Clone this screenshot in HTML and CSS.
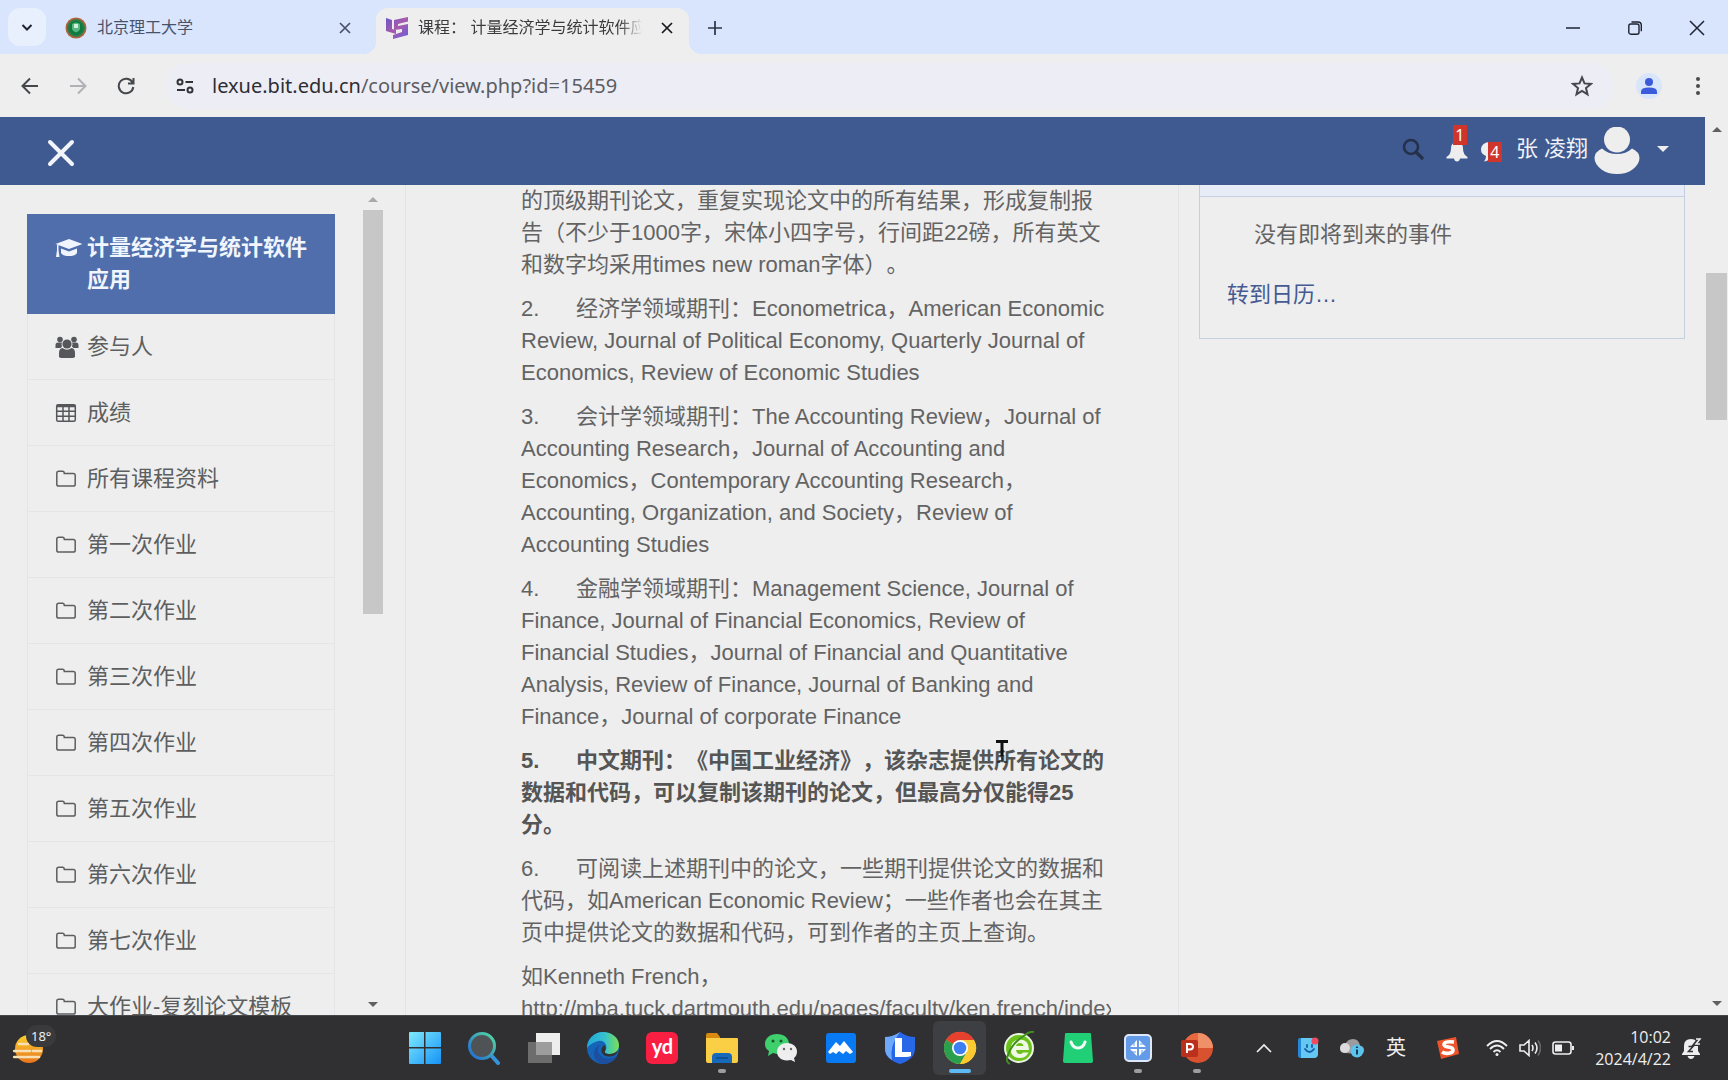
FILE: index.html
```html
<!DOCTYPE html>
<html lang="zh-CN">
<head>
<meta charset="utf-8">
<title>课程： 计量经济学与统计软件应用</title>
<link rel="stylesheet" href="styles.css">
</head>
<body>
<svg class="defs" aria-hidden="true">
  <symbol id="folder" viewBox="0 0 22 22"><path d="M1.800 5.200q0-1.900 1.900-1.900h3.800q1.700 0 1.800 2.100h9q1.900 0 1.900 1.900v8.900q0 1.900-1.900 1.900H3.700q-1.900 0-1.900-1.900z" fill="none" stroke="currentColor" stroke-width="1.500"/></symbol>
  <symbol id="x" viewBox="0 0 14 14"><path d="M2 2l10 10M12 2L2 12" fill="none" stroke="currentColor" stroke-width="1.700"/></symbol>
</svg>

<header class="tabs">
  <button class="tab-search" aria-label="搜索标签页"><svg width="12" height="12" viewBox="0 0 12 12"><path d="M1.500 4L6 8.500 10.500 4" fill="none" stroke="#1f2430" stroke-width="2"/></svg></button>
  <div class="tab">
    <svg width="22" height="22" viewBox="0 0 22 22"><circle cx="11" cy="11" r="10.500" fill="#b5623c"/><circle cx="11" cy="11" r="9" fill="#2f7d46"/><circle cx="11" cy="11" r="7" fill="#0d7a3f"/><path d="M7 7q4-3 8 0v5q-1 3-4 3.500-3-.5-4-3.500z" fill="#58b781"/><path d="M9 7h4v4H9z" fill="#d3efdc"/></svg>
    <span class="tab-title">北京理工大学</span>
    <button class="plain" aria-label="关闭"><svg width="14" height="14"><use href="#x"/></svg></button>
  </div>
  <div class="tab active">
    <svg width="22" height="22" viewBox="0 0 22 22"><defs><linearGradient id="lg" x1="0" y1="0" x2="1" y2="1"><stop offset="0" stop-color="#6a55c8"/><stop offset=".5" stop-color="#a85bab"/><stop offset="1" stop-color="#665de0"/></linearGradient></defs><path d="M0 1l6 2v9l4 1v4L0 14zM8 3l14-3v4.500L12 7v2l10-2v11L7 22v-4l9-3v-3l-8 1z" fill="url(#lg)"/></svg>
    <span class="tab-title">课程： 计量经济学与统计软件应用</span>
    <button class="plain" aria-label="关闭"><svg width="14" height="14"><use href="#x"/></svg></button>
  </div>
  <button class="plain new-tab" aria-label="新标签页"><svg width="16" height="16" viewBox="0 0 16 16"><path d="M8 1v14M1 8h14" stroke="#2b3446" stroke-width="1.700"/></svg></button>
  <div class="win">
    <button class="plain" aria-label="最小化"><svg width="14" height="14" viewBox="0 0 14 14"><path d="M0 7h14" stroke="#1d2330" stroke-width="1.500"/></svg></button>
    <button class="plain" aria-label="还原"><svg width="14" height="14" viewBox="0 0 14 14"><rect x=".8" y="3" width="10.200" height="10.200" rx="2" fill="none" stroke="#1d2330" stroke-width="1.400"/><path d="M3.500 1h6.500q3.300 0 3.300 3.300v6" fill="none" stroke="#1d2330" stroke-width="1.400"/></svg></button>
    <button class="plain" aria-label="关闭窗口"><svg width="16" height="16" viewBox="0 0 16 16"><path d="M1 1l14 14M15 1L1 15" stroke="#1d2330" stroke-width="1.500"/></svg></button>
  </div>
</header>

<div class="toolbar">
  <nav class="navs">
    <button class="plain" aria-label="后退"><svg width="18" height="18" viewBox="0 0 18 18"><path d="M17 9H2M9 1.500L1.500 9 9 16.500" fill="none" stroke="#44474b" stroke-width="2"/></svg></button>
    <button class="plain" aria-label="前进"><svg width="18" height="18" viewBox="0 0 18 18"><path d="M1 9h15M9 1.500L16.500 9 9 16.500" fill="none" stroke="#b0b1b4" stroke-width="2"/></svg></button>
    <button class="plain" aria-label="刷新"><svg width="18" height="18" viewBox="0 0 18 18"><path d="M15.500 5.500A7.300 7.300 0 1 0 16.300 10M16.500 1v5.500H11" fill="none" stroke="#44474b" stroke-width="2"/></svg></button>
  </nav>
  <div class="omnibox">
    <svg width="18" height="16" viewBox="0 0 18 16" fill="none" stroke="#303236" stroke-width="2"><circle cx="4" cy="4" r="2.500"/><path d="M9.500 4H17M1 12h8"/><circle cx="14" cy="12" r="2.500"/></svg>
    <div class="url" role="textbox" aria-label="地址栏">lexue.bit.edu.cn<span>/course/view.php?id=15459</span></div>
    <button class="plain" aria-label="收藏"><svg width="22" height="22" viewBox="0 0 22 22"><path d="M11 2.500l2.500 5.900 6.400.5-4.900 4.200 1.500 6.300L11 16l-5.500 3.400L7 13.100 2.100 8.900l6.400-.5z" fill="none" stroke="#46484d" stroke-width="2"/></svg></button>
  </div>
  <button class="plain profile" aria-label="个人资料"><svg width="26" height="26" viewBox="0 0 26 26"><circle cx="13" cy="13" r="13" fill="#d9e5fb"/><circle cx="13" cy="9" r="4" fill="#3b5bdb"/><path d="M5 21v-2.500q0-4 8-4t8 4V21z" fill="#3b5bdb"/></svg></button>
  <button class="plain more" aria-label="更多"><svg width="6" height="20" viewBox="0 0 6 20" fill="#4a4a4d"><circle cx="3" cy="3" r="2"/><circle cx="3" cy="10" r="2"/><circle cx="3" cy="17" r="2"/></svg></button>
</div>

<div class="viewport">
  <div class="page">
    <header class="site-bar">
      <button class="plain" aria-label="关闭菜单"><svg width="28" height="28" viewBox="0 0 28 28"><path d="M3 3l22 22M25 3L3 25" stroke="#f1f4fb" stroke-width="4" stroke-linecap="round"/></svg></button>
      <div class="site-tools">
        <button class="plain raised" aria-label="搜索"><svg width="22" height="22" viewBox="0 0 22 22"><circle cx="9" cy="9" r="7" fill="none" stroke="#25304a" stroke-width="2.600"/><path d="M14 14l6 6" stroke="#25304a" stroke-width="3.200" stroke-linecap="round"/></svg></button>
        <button class="plain notice bell" aria-label="通知"><svg width="22" height="22" viewBox="0 0 22 22"><path d="M11 0q1.500 0 1.500 2Q17 3 17 8.500q0 6 4.500 8.500v1.500h-7.500q-.5 3-3 3t-3-3H.5V17Q5 14.500 5 8.500 5 3 9.500 2 9.500 0 11 0z" fill="#eeeeee"/></svg><span class="badge">1</span></button>
        <button class="plain notice chat" aria-label="消息"><svg width="22" height="22" viewBox="0 0 22 22"><path d="M10 1c6 0 10 3 10 7.500S16 16 10 16q-1 4-6 4.500 2-2 2-5.500-5-2-5-6.500C1 4 5 1 10 1z" fill="#eeeeee"/></svg><span class="badge">4</span></button>
        <span class="user raised">张 凌翔</span>
        <svg width="46" height="48" viewBox="0 0 46 48" fill="#eeeeee"><circle cx="23" cy="12.500" r="13"/><path d="M.5 31q0-6 7.500-9.500Q14 27 23 27t15-5.500q7.500 3.500 7.500 9.500 0 6-7 11.500-6 4.500-15.500 4.500T7.500 42.500Q.5 37 .5 31z"/></svg>
        <button class="plain raised" aria-label="用户菜单"><svg width="12" height="6" viewBox="0 0 12 6"><path d="M0 0h12L6 6z" fill="#eeeeee"/></svg></button>
      </div>
    </header>
    <div class="columns">
      <aside class="sidebar">
        <nav class="menu">
          <a class="current" href="#"><svg width="28" height="22" viewBox="0 0 28 22" fill="#f0f4fc"><path d="M14 1l13.500 5L14 11 .5 6z"/><path d="M6 10.500l8 3 8-3V15q-1.500 3-8 3t-8-3zM2 7h1.500v5l1 7H1l1-7z"/></svg><span>计量经济学与统计软件应用</span></a>
          <a href="#"><svg width="24" height="22" viewBox="0 0 24 22" fill="#55575a"><circle cx="5" cy="3.500" r="2.800"/><circle cx="19" cy="3.500" r="2.800"/><path d="M.5 12V9q0-2.500 2.500-2.500h4Q6 8 7 10.500L5.500 12zM23.500 12V9q0-2.500-2.500-2.500h-4q1 1.500 0 4l1.500 1.500z"/><circle cx="12" cy="8" r="4.600"/><path d="M4 21v-4q0-4.500 3.500-5 4.500 3.500 9 0 3.500.5 3.500 5v4q-1 1-2.500 1h-11Q5 22 4 21z"/></svg><span>参与人</span></a>
          <a href="#"><svg width="22" height="22" viewBox="0 0 22 22" fill="none" stroke="#55575a" stroke-width="1.500"><rect x="1.700" y="2.700" width="18.600" height="16.600" rx="1.500"/><path d="M1.700 4h18.600" stroke-width="2.500"/><path d="M1.700 9.300h18.600M1.700 14.300h18.600M8 4v15M14 4v15"/></svg><span>成绩</span></a>
          <a href="#"><svg width="22" height="22"><use href="#folder"/></svg><span>所有课程资料</span></a>
          <a href="#"><svg width="22" height="22"><use href="#folder"/></svg><span>第一次作业</span></a>
          <a href="#"><svg width="22" height="22"><use href="#folder"/></svg><span>第二次作业</span></a>
          <a href="#"><svg width="22" height="22"><use href="#folder"/></svg><span>第三次作业</span></a>
          <a href="#"><svg width="22" height="22"><use href="#folder"/></svg><span>第四次作业</span></a>
          <a href="#"><svg width="22" height="22"><use href="#folder"/></svg><span>第五次作业</span></a>
          <a href="#"><svg width="22" height="22"><use href="#folder"/></svg><span>第六次作业</span></a>
          <a href="#"><svg width="22" height="22"><use href="#folder"/></svg><span>第七次作业</span></a>
          <a href="#"><svg width="22" height="22"><use href="#folder"/></svg><span>大作业-复刻论文模板</span></a>
        </nav>
        <div class="scroll side-scroll"><i class="up"></i><i class="thumb"></i><i class="down"></i></div>
      </aside>
      <main class="content">
        <article>
          <p>的顶级期刊论文，重复实现论文中的所有结果，形成复制报<br>告（不少于1000字，宋体小四字号，行间距22磅，所有英文<br>和数字均采用times new roman字体）。</p>
          <p>2.&nbsp;&nbsp;&nbsp;&nbsp;&nbsp;&nbsp;经济学领域期刊：Econometrica，American Economic<br>Review, Journal of Political Economy, Quarterly Journal of<br>Economics, Review of Economic Studies</p>
          <p>3.&nbsp;&nbsp;&nbsp;&nbsp;&nbsp;&nbsp;会计学领域期刊：The Accounting Review，Journal of<br>Accounting Research，Journal of Accounting and<br>Economics，Contemporary Accounting Research，<br>Accounting, Organization, and Society，Review of<br>Accounting Studies</p>
          <p>4.&nbsp;&nbsp;&nbsp;&nbsp;&nbsp;&nbsp;金融学领域期刊：Management Science, Journal of<br>Finance, Journal of Financial Economics, Review of<br>Financial Studies，Journal of Financial and Quantitative<br>Analysis, Review of Finance, Journal of Banking and<br>Finance，Journal of corporate Finance</p>
          <p><b>5.&nbsp;&nbsp;&nbsp;&nbsp;&nbsp;&nbsp;中文期刊：《中国工业经济》，该杂志提供所有论文的<br>数据和代码，可以复制该期刊的论文，但最高分仅能得25<br>分。</b></p>
          <p>6.&nbsp;&nbsp;&nbsp;&nbsp;&nbsp;&nbsp;可阅读上述期刊中的论文，一些期刊提供论文的数据和<br>代码，如American Economic Review；一些作者也会在其主<br>页中提供论文的数据和代码，可到作者的主页上查询。</p>
          <p>如Kenneth French，<br>http://mba.tuck.dartmouth.edu/pages/faculty/ken.french/index</p>
        </article>
      </main>
      <aside class="events">
        <section class="card">
          <div class="card-head"></div>
          <p>没有即将到来的事件</p>
          <a href="#">转到日历…</a>
        </section>
      </aside>
    </div>
  </div>
  <div class="scroll page-scroll"><i class="up"></i><i class="thumb"></i><i class="down"></i></div>
</div>

<svg class="cursor" width="12" height="24" viewBox="0 0 12 24" aria-hidden="true"><path d="M0 1.500h12M6 1.500v15" stroke="#111" stroke-width="3"/><path d="M6 17v4M1 22h3M8 22h3" stroke="#222" stroke-width="1.500"/></svg>

<footer class="taskbar">
  <div class="weather">
    <svg width="32" height="32" viewBox="0 0 32 32"><defs><linearGradient id="sun" x1="0" y1="0" x2="0" y2="1"><stop offset="0" stop-color="#fbd32d"/><stop offset="1" stop-color="#e8741c"/></linearGradient></defs><circle cx="16" cy="17" r="14" fill="url(#sun)"/><path d="M6 12h9M1 19h16M20 19h8M1 25h25" stroke="#f8dfb4" stroke-width="2.500" stroke-linecap="round"/></svg>
    <span>18°</span>
  </div>
  <div class="apps">
    <button class="plain app" aria-label="开始"><svg width="32" height="32" viewBox="0 0 32 32"><defs><linearGradient id="win" x1="0" y1="0" x2="1" y2="1"><stop offset="0" stop-color="#7fe9ff"/><stop offset="1" stop-color="#1593f5"/></linearGradient></defs><path d="M0 1q0-1 1-1h14v15H0zM16.500 0H31q1 0 1 1v14H16.500zM0 16.500h15V32H1q-1 0-1-1zM16.500 16.500H32V31q0 1-1 1H16.500z" fill="url(#win)"/></svg></button>
    <button class="plain app" aria-label="搜索"><svg width="32" height="34" viewBox="0 0 32 34"><defs><linearGradient id="se" x1="1" y1="0" x2="0" y2="1"><stop offset="0" stop-color="#55d9a0"/><stop offset="1" stop-color="#1f68d8"/></linearGradient></defs><path d="M22 23l8 9" stroke="#3594dc" stroke-width="4" stroke-linecap="round"/><circle cx="14" cy="15" r="12.500" fill="#505356" stroke="url(#se)" stroke-width="3"/></svg></button>
    <button class="plain app" aria-label="任务视图"><svg width="32" height="32" viewBox="0 0 32 32"><path d="M8 1h24v22H8z" fill="#eeeeee"/><path d="M0 10h24v21H0z" fill="#818181" opacity=".75"/></svg></button>
    <button class="plain app" aria-label="Edge"><svg width="34" height="34" viewBox="0 0 34 34"><defs><linearGradient id="ed"><stop offset="0" stop-color="#22a9d8"/><stop offset=".55" stop-color="#35c1d0"/><stop offset="1" stop-color="#7be052"/></linearGradient></defs><circle cx="17" cy="17" r="16" fill="#1564b8"/><path d="M1 17C1 8 8 1 17 1s16 6 16 13-5 9-9 9-6-1-5-3 2-3 1-6-4-5-8-4-8 3-11 7z" fill="url(#ed)"/><path d="M14 14q-4 5 0 10t12 3l5-2q-4 8-14 8-9-2-9-10 0-7 6-9z" fill="#1c4fa0"/><path d="M18 14q3 3 1 6-1 3 4 3 6 0 9-4-1 5-5 6-8 2-11-3-2-4 2-8z" fill="#303236"/></svg></button>
    <button class="plain app" aria-label="有道"><span class="yd">yd</span></button>
    <button class="plain app" aria-label="文件资源管理器"><svg width="34" height="32" viewBox="0 0 34 32"><path d="M1 3q0-2 2-2h9l3 4v5H1z" fill="#d98a10"/><path d="M1 6h31q1 0 1 1v22q0 2-2 2H3q-2 0-2-2z" fill="#fbcf45"/><path d="M7 31v-6q0-4 4-4h12q4 0 4 4v6z" fill="#176ab9"/><path d="M11 26h12" stroke="#0d4c90" stroke-width="1.500"/></svg><i class="run"></i></button>
    <button class="plain app" aria-label="微信"><svg width="34" height="30" viewBox="0 0 34 30"><path d="M13 1c7 0 12 4 12 10s-5 10-12 10l-4-1-5 3 1-5C2 16 1 14 1 11 1 5 6 1 13 1z" fill="#3fd06d"/><circle cx="9" cy="8" r="1.500" fill="#16592f"/><circle cx="17" cy="8" r="1.500" fill="#16592f"/><path d="M23 10c6 0 10 4 10 8.500 0 3-1 5-3 6.500l1 4-4-2c-9 2-14-3-14-8S17 10 23 10z" fill="#eeeeee"/><circle cx="20" cy="16" r="1.200" fill="#666"/><circle cx="27" cy="16" r="1.200" fill="#666"/></svg></button>
    <button class="plain app" aria-label="腾讯会议"><svg width="30" height="30" viewBox="0 0 30 30"><rect width="30" height="30" rx="3" fill="#087bf4"/><path d="M2 19l8-10 4 4 4-5 9 11-3 2-4-3-3 3-4-3-3 3-3-2-3 2z" fill="#fff"/></svg></button>
    <button class="plain app" aria-label="联想电脑管家"><svg width="32" height="32" viewBox="0 0 32 32"><path d="M16 0q7 5 15 5v12q0 10-15 15Q1 27 1 17V5q8 0 15-5z" fill="#2867e8"/><path d="M16 0Q9 5 1 5v12q0 7 7 11Q5 14 16 0z" fill="#6ea8fa"/><path d="M11 6h7v14h9v4q-2 1-5 1H11z" fill="#fff"/></svg></button>
    <button class="plain app selected" aria-label="Chrome"><svg width="34" height="34" viewBox="0 0 34 34"><circle cx="17" cy="17" r="16" fill="#fbc932"/><path d="M17 17L3.100 9A16 16 0 0 1 31 9z" fill="#e6402f"/><path d="M17 17L3.100 9A16 16 0 0 0 17 33l7-12z" fill="#2aa04e"/><path d="M17 9h14a16 16 0 0 1-14 24l7-12z" fill="#fbc932"/><circle cx="17" cy="17" r="8" fill="#fff"/><circle cx="17" cy="17" r="6.300" fill="#3d7ff0"/></svg><i class="run"></i></button>
    <button class="plain app" aria-label="浏览器"><svg width="32" height="34" viewBox="0 0 32 34"><circle cx="16" cy="17" r="14" fill="#6cc21b" stroke="#e9f5e0" stroke-width="2"/><path fill-rule="evenodd" d="M26 19H13q.5 4 4 4 2 0 3-1.500h5.500Q23 27 16.500 27 8 27 7.500 18 8 8.500 17 8.500q9 0 9 10.500zM13 15h7.500q-.5-3-3.700-3T13 15z" fill="#eff9e6"/><path d="M31 1q-4-1-9 3Q9 12 5 24q-3 7 2 9" fill="none" stroke="#3e8f1c" stroke-width="2"/></svg></button>
    <button class="plain app" aria-label="应用商店"><svg width="30" height="32" viewBox="0 0 30 32"><path d="M3 1h24q1 0 1 1l2 27q0 2-2 2H2q-2 0-2-2L2 2q0-1 1-1z" fill="#21cf76"/><path d="M8 10q2 6 7 6t7-6" fill="none" stroke="#f2fff7" stroke-width="3" stroke-linecap="round"/></svg></button>
    <button class="plain app" aria-label="工具"><svg width="28" height="28" viewBox="0 0 28 28"><rect x="1" y="1" width="26" height="26" rx="4" fill="#639be8" stroke="#dde9f8" stroke-width="2"/><path d="M13 6v7H6zM15 6v7h7zM13 22v-7H6zM15 22v-7h7z" fill="#fff"/><path d="M10 8v4M20 10h-4M18 20v-4M8 18h4" stroke="#639be8" stroke-width="1"/></svg><i class="run"></i></button>
    <button class="plain app" aria-label="PowerPoint"><svg width="34" height="32" viewBox="0 0 34 32"><circle cx="18" cy="16" r="15" fill="#d9522f"/><path d="M3 16a15 15 0 0 1 15-15v15z" fill="#e8683f"/><path d="M18 1a15 15 0 0 1 15 15H18z" fill="#f09069"/><rect x="1" y="8" width="17" height="17" rx="2" fill="#bb2f1d"/><path d="M7 21v-9h3q3 0 3 2.700T10 17.500H7" fill="none" stroke="#fff" stroke-width="2"/></svg><i class="run"></i></button>
  </div>
  <div class="tray">
    <button class="plain slot" aria-label="显示隐藏的图标"><svg width="16" height="10" viewBox="0 0 16 10"><path d="M1 9l7-7 7 7" fill="none" stroke="#eeeeee" stroke-width="1.700"/></svg></button>
    <span class="slot"><svg width="22" height="22" viewBox="0 0 22 22"><rect x="1" y="1" width="20" height="20" rx="4" fill="#65c8f2"/><path d="M3 1h1v20q-3 0-3-4V4q0-3 2-3z" fill="#2587d8"/><path d="M8 12q4.500 6 9 0M10 8v2M15 8v2" stroke="#145ba8" stroke-width="1.800" fill="none" stroke-linecap="round"/><circle cx="18" cy="4" r="3.500" fill="#f04a60"/></svg></span>
    <span class="slot"><svg width="24" height="20" viewBox="0 0 24 20"><path d="M5 15q-5 0-5-4t5-4q2-6 8-6t7 7q4 0 4 4t-4 4z" fill="#9d9b9d"/><circle cx="5" cy="10" r="5" fill="#dddadc"/><circle cx="17" cy="13" r="6.500" fill="#5cc3ef"/><path d="M17 11.500v5M17 8.500v1.500" stroke="#173b52" stroke-width="2"/></svg></span>
    <span class="slot ime">英</span>
    <span class="slot wide"><svg width="24" height="22" viewBox="0 0 24 22"><path d="M1 4l19-4 3 17-18 5z" fill="#ee532b"/><path d="M18 5q-10-1-10 2.500c0 4 9 1 9 5.500 0 4-8 4-11 2" fill="none" stroke="#fff" stroke-width="3.600"/></svg></span>
    <span class="slot wifi"><svg width="22" height="18" viewBox="0 0 22 18" fill="none" stroke="#eeeeee" stroke-width="1.800"><path d="M1 7q10-10 20 0M4 10q7-7 14 0M7.500 13q3.500-3.500 7 0"/><circle cx="11" cy="15.500" r="1.500" fill="#eeeeee" stroke="none"/></svg></span>
    <span class="slot volume"><svg width="22" height="18" viewBox="0 0 22 18" fill="none" stroke="#eeeeee" stroke-width="1.600"><path d="M1 6h4l5-4.500v15L5 12H1zM13 6q2 3 0 6M16 3.500q4 5.500 0 11"/><path d="M19 1.500q5 7.500 0 15" stroke="#66666a"/></svg></span>
    <span class="slot wifi"><svg width="22" height="14" viewBox="0 0 22 14"><rect x="1" y="1" width="18" height="12" rx="2.500" fill="none" stroke="#eeeeee" stroke-width="1.600"/><path d="M3 3.500h7v7H3zM20 5h2v4h-2z" fill="#eeeeee"/></svg></span>
    <time class="clock">10:02<br>2024/4/22</time>
    <span class="slot dnd"><svg width="20" height="22" viewBox="0 0 20 22"><path d="M9 2q7 0 7 7v5l2 3v1H0v-1l2-3V9q0-7 7-7zM5.500 19h7q-1 3-3.500 3t-3.500-3z" fill="#eeeeee"/><path d="M13.500 2h4l-4 5h4" fill="none" stroke="#303032" stroke-width="4"/><path d="M14 2h4l-4 5h4" fill="none" stroke="#eeeeee" stroke-width="1.500"/><path d="M6.500 9.500H11l-4.500 5H11" fill="none" stroke="#303032" stroke-width="1.500"/></svg></span>
  </div>
</footer>
</body>
</html>
```
FILE: styles.css
```css
* { box-sizing: border-box; }

body {
  margin: 0;
  height: 100vh;
  display: flex;
  flex-direction: column;
  overflow: hidden;
  background: #eeeeee;
  color: #636363;
  font: 22px/32px "Liberation Sans", "Noto Sans CJK SC", sans-serif;
  text-spacing-trim: space-all;
}

a { color: inherit; text-decoration: none; }
svg { display: block; flex: none; }
.defs { position: absolute; width: 0; height: 0; }

.plain {
  display: flex;
  align-items: center;
  justify-content: center;
  padding: 0;
  border: 0;
  background: none;
  color: inherit;
  font: inherit;
}

/* Tab strip */
.tabs {
  flex: none;
  display: flex;
  height: 54px;
  padding: 8px 0 0 8px;
  background: #d8e5fd;
}

.tab-search {
  display: flex;
  align-items: center;
  justify-content: center;
  width: 38px;
  height: 38px;
  padding: 0;
  border: 0;
  border-radius: 12px;
  background: #e9f0fd;
}

.tab {
  display: flex;
  align-items: center;
  gap: 10px;
  width: 313px;
  height: 46px;
  padding: 0 15px 6px 10px;
  color: #48536a;
  font-size: 16px;
}

.tab:not(.active) { width: 330px; padding-left: 19px; padding-right: 24px; }
.tab-title { flex: 1; overflow: hidden; white-space: nowrap; }

.active {
  position: relative;
  border-radius: 12px 12px 0 0;
  background: #eeeeee;
  color: #3b3b3d;
}

.active::before,
.active::after {
  content: "";
  position: absolute;
  bottom: 0;
  width: 12px;
  height: 12px;
}

.active::before { right: 100%; background: radial-gradient(circle at 0 0, transparent 12px, #eeeeee 12px); }
.active::after { left: 100%; background: radial-gradient(circle at 100% 0, transparent 12px, #eeeeee 12px); }
.active .tab-title { margin-right: 8px; mask-image: linear-gradient(90deg, #000 90%, transparent); }
.active .plain { color: #18191b; }
.new-tab { width: 52px; height: 40px; }
.win { display: flex; height: 40px; margin-left: auto; }
.win .plain { width: 62px; }

/* Toolbar */
.toolbar {
  flex: none;
  display: flex;
  align-items: center;
  height: 63px;
  padding: 0 16px 0 6px;
}

.navs { display: flex; }
.navs .plain { width: 48px; height: 44px; }

.omnibox {
  flex: 1;
  display: flex;
  align-items: center;
  gap: 18px;
  height: 46px;
  margin-left: 15px;
  padding: 0 21px 0 11px;
  border-radius: 23px;
  background: #ededf6;
}

.url {
  flex: 1;
  color: #2d2e32;
  font: 20px/28px "Noto Sans", sans-serif;
}

.url span { color: #5c5d63; }
.profile { width: 26px; margin-left: 22px; }
.more { width: 28px; margin-left: 22px; }

/* Web page */
.viewport { flex: 1; display: flex; min-height: 0; }
.page { flex: 1; display: flex; flex-direction: column; min-width: 0; }

.site-bar {
  flex: none;
  display: flex;
  align-items: center;
  justify-content: space-between;
  height: 68px;
  padding: 0 36px 0 47px;
  background: #3f5a90;
}

.site-bar > .plain { margin-top: 4px; }
.site-tools { display: flex; align-items: center; color: #f0f2f7; }
.raised { margin-bottom: 4px; }
.notice { position: relative; }
.bell { margin-left: 22px; }
.chat { margin: 2px 14px 0 12px; }

.badge {
  position: absolute;
  width: 14px;
  height: 20px;
  background: #d0352c;
  color: #ffffff;
  font: 16px/20px "Noto Sans", sans-serif;
}

.bell .badge { left: 7px; bottom: 17px; }
.chat .badge { left: 8px; bottom: 1px; }
.user { margin-right: 6px; white-space: nowrap; }
.site-tools > .plain:last-child { margin-left: 17px; }

.columns { flex: 1; display: flex; min-height: 0; overflow: hidden; }

.sidebar {
  flex: none;
  display: flex;
  width: 406px;
  padding-left: 27px;
  border-right: 1px solid #e2e4e5;
}

.menu { width: 308px; padding-top: 29px; overflow: hidden; }

.menu a {
  display: flex;
  align-items: center;
  height: 66px;
  padding-left: 27px;
  border: 1px solid #e4e5e7;
  border-top: 0;
  color: #5c5e60;
}

.menu svg { margin-right: 10px; }
.menu a svg[width="24"] { margin-right: 8px; }

.menu .current {
  align-items: flex-start;
  height: 100px;
  padding: 18px 20px 0 28px;
  border: 0;
  background: #4f6eab;
  color: #f1f5fd;
  font-weight: bold;
}

.menu .current svg { margin: 6px 4px 0 0; }

.scroll {
  display: flex;
  flex-direction: column;
  align-items: center;
}

.up, .down {
  width: 0;
  height: 0;
  border: 5px solid transparent;
}

.up { border-top: 0; border-bottom-color: #606060; }
.down { border-bottom: 0; border-top-color: #606060; margin-top: auto; }
.thumb { width: 100%; background: #c7c7c7; }

.side-scroll { width: 20px; margin-left: 28px; padding: 12px 0 8px; }
.side-scroll .up { border-bottom-color: #a9a9a9; }
.side-scroll .thumb { height: 404px; margin-top: 8px; }

.page-scroll { flex: none; width: 23px; padding: 10px 1px 9px; }
.page-scroll .thumb { height: 147px; margin-top: 141px; }

.content {
  flex: 1;
  min-width: 0;
  padding-left: 115px;
  border-right: 1px solid #e3e4e5;
  overflow: hidden;
}

article { max-width: 590px; overflow: hidden; white-space: nowrap; }
article p { margin: 0 0 12px; }
article b { color: #555555; }

.events { flex: none; width: 526px; padding: 0 20px; }

.card {
  height: 154px;
  padding: 0 27px;
  border: 1px solid #c6cfe2;
  border-top: 0;
}

.card-head {
  height: 12px;
  margin: 0 -27px;
  border-bottom: 1px solid #c6cfe2;
  background: #e8ecf6;
}

.card p { margin: 22px 0 28px 27px; }
.card a { color: #445a92; }

.cursor { position: absolute; left: 996px; top: 740px; }

/* Taskbar */
.taskbar {
  flex: none;
  display: grid;
  grid-template-columns: 395px 832px 1fr;
  height: 65px;
  border-top: 1px solid #45474a;
  background: #303032;
  color: #eeeeee;
}

.weather { position: relative; padding: 16px 0 0 13px; }

.weather span {
  position: absolute;
  left: 26px;
  top: 9px;
  padding: 0 5px;
  border-radius: 12px;
  background: #3a3a3c;
  font: 13px/22px "Noto Sans", sans-serif;
}

.apps { display: grid; grid-template-columns: repeat(14, 1fr); align-items: center; }
.app { position: relative; height: 54px; margin: 0 3px; border-radius: 6px; }
.selected { background: #3e3f42; }

.run {
  position: absolute;
  bottom: 2px;
  width: 8px;
  height: 4px;
  border-radius: 2px;
  background: #9c9da0;
}

.selected .run { width: 22px; background: #5fb9f3; }

.yd {
  width: 32px;
  height: 32px;
  border-radius: 6px;
  background: #f91f42;
  color: #ffffff;
  font: bold 20px/28px Lato, sans-serif;
}

.tray { display: flex; align-items: center; justify-content: flex-end; padding-right: 15px; }
.slot { display: flex; justify-content: center; width: 44px; }
.ime { font-size: 20px; }
.wide { width: 60px; }
.wifi { width: 38px; }
.volume { width: 28px; }
.clock { width: 89px; text-align: right; font: 16px/22px "Open Sans", sans-serif; }
.dnd { width: 42px; }
```
